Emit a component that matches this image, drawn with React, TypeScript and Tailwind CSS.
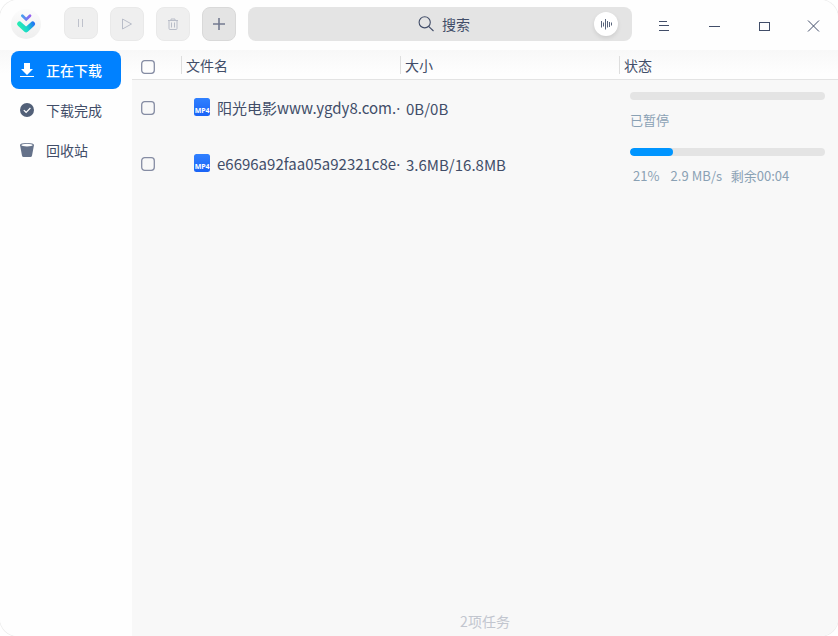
import type { ReactNode } from "react";

const tasks = [
  { name: "阳光电影www.ygdy8.com.", size: "0B/0B", progress: 0, status: ["已暂停"] },
  { name: "e6696a92faa05a92321c8e", size: "3.6MB/16.8MB", progress: 43, status: ["21%", "2.9 MB/s", "剩余00:04"] },
];

function Checkbox() {
  return (
    <svg width="14" height="14" viewBox="0 0 14 14" className="block shrink-0">
      <rect x="0.7" y="0.7" width="12.6" height="12.6" rx="3" fill="none" stroke="#858ca3" strokeWidth="1.3" />
    </svg>
  );
}

function Logo() {
  return (
    <svg width="30" height="30" viewBox="0 0 30 30" className="shrink-0">
      <defs>
        <linearGradient id="disc" x1="0" y1="0" x2="0" y2="1">
          <stop offset="0" stopColor="#fcfcfc" />
          <stop offset="1" stopColor="#eeeeee" />
        </linearGradient>
        <linearGradient id="small" x1="10" y1="8" x2="20" y2="8" gradientUnits="userSpaceOnUse">
          <stop offset="0" stopColor="#3aa8f0" />
          <stop offset="1" stopColor="#9a5cf0" />
        </linearGradient>
        <linearGradient id="large" x1="8" y1="20" x2="23" y2="14" gradientUnits="userSpaceOnUse">
          <stop offset="0" stopColor="#2bf0b0" />
          <stop offset="0.5" stopColor="#18d4cc" />
          <stop offset="1" stopColor="#2270f4" />
        </linearGradient>
      </defs>
      <circle cx="15" cy="15" r="15" fill="url(#disc)" />
      <path d="M11.4 6.8 15.2 10.4l3.8-3.6" fill="none" stroke="url(#small)" strokeWidth="2.8" strokeLinecap="round" />
      <path d="M8.6 15 15.1 20.8l6.5-5.8" fill="none" stroke="url(#large)" strokeWidth="5" strokeLinecap="round" strokeLinejoin="round" />
    </svg>
  );
}

function ToolButton({ children, className }: { children: ReactNode; className: string }) {
  return (
    <button className={`flex w-[34px] items-center justify-center rounded-lg border ${className}`}>{children}</button>
  );
}

function FileIcon() {
  return (
    <span className="mb-0.5 flex h-[18px] w-4 shrink-0 items-end justify-center rounded-[2.5px] bg-linear-to-b from-[#3080ff] to-[#1a63f6] pb-px font-['Open_Sans',sans-serif] text-[7px] leading-[8px] font-bold tracking-[-0.2px] text-white">
      MP4
    </span>
  );
}

function Header() {
  return (
    <header className="flex h-[50px] shrink-0 items-start bg-[#fefefe]">
      <div className="mt-[9px] ml-[11px]"><Logo /></div>
      <div className="mt-[7px] ml-[23px] flex gap-3">
        <ToolButton className="h-8 border-[#e9e9e9] bg-[#efefef]">
          <svg width="8" height="8" viewBox="0 0 8 8" stroke="#bec1cb"><path d="M1.5 0v8M5.5 0v8" /></svg>
        </ToolButton>
        <ToolButton className="h-[34px] border-[#e9e9e9] bg-[#efefef]">
          <svg width="12" height="12" viewBox="0 0 12 12" fill="none" stroke="#b9bdc8"><path d="M1.5 1v10l9-5z" /></svg>
        </ToolButton>
        <ToolButton className="h-[34px] border-[#e9e9e9] bg-[#efefef]">
          <svg width="12" height="12" viewBox="0 0 12 12" fill="none" stroke="#b9bdc8"><path d="M1 2.5h10M4 2.5v-1.5h4v1.5M2 3v7.5q0 1 1 1h6q1 0 1-1V3M4.5 4.5v5M7.5 4.5v5" /></svg>
        </ToolButton>
        <ToolButton className="h-[34px] border-[#d9d9d9] bg-[#e4e4e4]">
          <svg width="12" height="12" viewBox="0 0 12 12" stroke="#737a90" strokeWidth="1.6"><path d="M6 0v12M0 6h12" /></svg>
        </ToolButton>
      </div>
      <div className="mt-[7px] ml-3 flex h-[34px] w-[384px] items-center rounded-lg bg-[#e4e4e4]">
        <svg width="16" height="16" viewBox="0 0 16 16" fill="none" stroke="#414d68" strokeWidth="1.1" className="ml-[170px]">
          <circle cx="6.7" cy="6.3" r="5.6" /><path d="m10.6 10.4 4.9 4.6" />
        </svg>
        <span className="ml-2 text-[14px] leading-5">搜索</span>
        <span className="mr-[14px] ml-auto flex size-6 items-center justify-center rounded-full bg-white shadow-[0_2px_4px_rgba(0,0,0,0.1)]">
          <svg width="12" height="12" viewBox="0 0 12 12" stroke="#59647b"><path d="M1.5 3v6.5M3.5 4.5v4M5.5 1v10.5M7.5 3v6.5M9.5 4v5M11.5 4.5v3" /></svg>
        </span>
      </div>
      <svg width="162" height="12" viewBox="0 0 162 12" fill="none" stroke="#414d68" className="mt-5 ml-[27px]">
        <path d="M0 1.5h8M0 5.5h10M0 10.5h10M50 6.5h11" />
        <rect x="100.5" y="2.5" width="10" height="8" />
        <path d="m149 0.5 11 11m0-11-11 11" />
      </svg>
    </header>
  );
}

function Sidebar() {
  return (
    <nav className="flex w-[132px] shrink-0 flex-col bg-[linear-gradient(#f8f8f8,#fefefe_24px)] pt-px pl-[11px]">
      <a className="flex h-[38px] w-[110px] items-center rounded-lg bg-[#0081ff] pl-[9px] font-medium text-white">
        <svg width="14" height="14" viewBox="0 0 14 14" fill="#fff" className="mr-3"><path d="M4 0h6v6h3l-6 6-6-6h3zM0 13h14v1H0z" /></svg>
        正在下载
      </a>
      <a className="mt-0.5 flex h-[38px] items-center pl-[9px]">
        <svg width="14" height="14" viewBox="0 0 14 14" className="mr-3"><circle cx="7" cy="7" r="7" fill="#526078" /><path d="m3.8 7.1 2.3 2.2 4.3-4.3" fill="none" stroke="#fff" strokeWidth="1.2" /></svg>
        下载完成
      </a>
      <a className="mt-0.5 flex h-[38px] items-center pl-[9px]">
        <svg width="14" height="14" viewBox="0 0 14 14" className="mr-3"><path d="M0 2Q0 0 7 0t7 2L12 12.5Q11.7 14 10.5 14h-7Q2.3 14 2 12.5z" fill="#65728a" /><ellipse cx="7" cy="2.1" rx="5.8" ry="1.3" fill="#fff" /></svg>
        回收站
      </a>
    </nav>
  );
}

export default function App() {
  return (
    <div className="h-[636px] w-[838px] bg-white font-['Noto_Sans_CJK_SC',sans-serif] text-[14px] leading-5 text-[#414d68]">
      <div className="flex h-full flex-col overflow-hidden rounded-[18px] shadow-[0_0_0_1px_#eeeeee]">
        <Header />
        <div className="flex min-h-0 flex-1">
          <Sidebar />
          <main className="flex min-w-0 flex-1 flex-col bg-[#f8f8f8]">
            <div className="flex h-[30px] shrink-0 items-center border-b border-[#e3e3e3] bg-[linear-gradient(#f8f8f8,#fefefe_24px)]">
              <div className="mt-[5px] w-[49px] pl-[9px]"><Checkbox /></div>
              <div className="mt-px flex h-[18px] w-[219px] items-center border-l border-[#dedede] pl-1">文件名</div>
              <div className="mt-px flex h-[18px] w-[219px] items-center border-l border-[#dedede] pl-1">大小</div>
              <div className="mt-px flex h-[18px] items-center border-l border-[#dedede] pl-1">状态</div>
            </div>
            {tasks.map((task) => (
              <div key={task.name} className="flex h-14 shrink-0 items-center text-[15px]">
                <div className="w-[62px] pl-[9px]"><Checkbox /></div>
                <FileIcon />
                <span className="ml-[7px] flex w-[189px] shrink-0 whitespace-nowrap">
                  {task.name}
                  <span className="font-['Noto_Sans',sans-serif]">·</span>
                </span>
                <span className="mt-0.5 w-[224px]">{task.size}</span>
                <div className="h-full pt-3">
                  <div className="h-2 w-[195px] overflow-hidden rounded-full bg-[#e4e4e4]">
                    <div className="h-full rounded-full bg-[#0095ff]" style={{ width: task.progress }} />
                  </div>
                  <div className={`mt-[10px] flex text-[13px] text-[#8aa1b4] ${task.progress ? "pl-[3px]" : ""}`}>
                    {task.status.map((s, i) => (
                      <span key={s} className={i === 1 ? "mr-[8.5px] ml-[11px] tracking-[0.08px]" : ""}>{s}</span>
                    ))}
                  </div>
                </div>
              </div>
            ))}
            <footer className="mt-auto mb-[5px] text-center text-[#c2c6cf]">2项任务</footer>
          </main>
        </div>
      </div>
    </div>
  );
}
